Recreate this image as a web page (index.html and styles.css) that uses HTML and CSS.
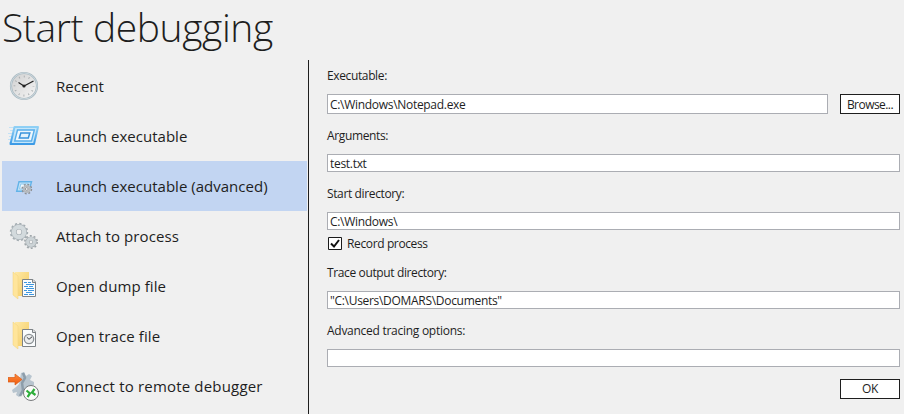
FILE: index.html
```html
<!DOCTYPE html>
<html lang="en">
<head>
<meta charset="utf-8">
<title>Start debugging</title>
<link rel="stylesheet" href="styles.css">
</head>
<body>
<svg class="defs" width="0" height="0" aria-hidden="true">
  <defs>
    <linearGradient id="folder" x1="0" y1="0" x2="1" y2="1"><stop offset="0" stop-color="#ffe9a6"/><stop offset="1" stop-color="#f3cb62"/></linearGradient>
    <linearGradient id="blue" x1="0" y1="0" x2="0" y2="1"><stop offset="0" stop-color="#8fd0f5"/><stop offset="1" stop-color="#3b9ae6"/></linearGradient>
    <linearGradient id="arrow" x1="0" y1="0" x2="0" y2="1"><stop offset="0" stop-color="#ff8a3c"/><stop offset="1" stop-color="#ee5a0c"/></linearGradient>
    <linearGradient id="face" x1="0" y1="0" x2="1" y2="1"><stop offset="0" stop-color="#cfcfcf"/><stop offset="1" stop-color="#f6f6f6"/></linearGradient>
    <g id="folder-shape">
      <path d="M7 2H21V26H7Z" fill="url(#folder)"/>
      <path d="M5 2L10 6V29L5 25Z" fill="#ffe59b" stroke="#f1d27c" stroke-width=".5"/>
      <path d="M14.500 9.500H25L27.500 12V26.500H14.500Z" fill="#fafcfd" stroke="#7d8286"/>
      <path d="M24.500 9.500V12.500H27.500" fill="#ddd" stroke="#7d8286"/>
    </g>
  </defs>
</svg>
<h1 class="title">Start debugging</h1>
<main class="content">
  <nav class="menu">
    <a class="item">
      <svg class="icon" viewBox="0 0 32 32">
        <circle cx="16" cy="16" r="13" fill="url(#face)" stroke="#a9b8c0" stroke-width="2.200"/>
        <circle cx="16" cy="16" r="13.100" fill="none" stroke="#d3dfe4" stroke-width=".8"/>
        <circle cx="16" cy="16" r="9.500" fill="none" stroke="#a9adaf" stroke-width="1.800" stroke-dasharray="1 3.974" stroke-dashoffset=".5"/>
        <path d="M10.500 12.500L16 16L25.500 11" fill="none" stroke="#222" stroke-width="1.200"/>
        <circle cx="16" cy="16" r="1.600" fill="#222"/>
      </svg><span>Recent</span></a>
    <a class="item">
      <svg class="icon" viewBox="0 0 32 32">
        <path d="M1 7.500H8M2 10.500H7M0 13.500H6M1 16.500H5M0 19.500H5M1 22.500H4" stroke="#c3e1f5" stroke-width="1"/>
        <path d="M6.500 7H30L26 24H2.500Z" fill="#c5e6fa" stroke="url(#blue)" stroke-width="2" stroke-linejoin="round"/>
        <path d="M9.500 10H26.300L23.500 21H6.700Z" fill="#eef7fd" stroke="#58aeea" stroke-width="1.400"/>
        <path d="M12.800 13H21.800L20.300 18H11.300Z" fill="#e4f3fc" stroke="#3994dc" stroke-width="1.500"/>
      </svg><span>Launch executable</span></a>
    <a class="item selected">
      <svg class="icon" viewBox="0 0 32 32">
        <path d="M11 11.700H23.500L21 21.300H8.700Z" fill="#c1e1f6" stroke="#62b3e8" stroke-width="1.400"/>
        <path d="M12.800 14H20.800L19.500 19H11.500Z" fill="#edf7fd" stroke="#8fcbf0" stroke-width="1"/>
        <circle cx="18.800" cy="19" r="4.600" fill="none" stroke="#8b8f94" stroke-width="1.600" stroke-dasharray="1.900 1.713"/>
        <circle cx="18.800" cy="19" r="3" fill="#e8eaec" stroke="#b5b9bd" stroke-width="2"/>
        <circle cx="18.800" cy="19" r="1.400" fill="#f6f7f8" stroke="#7e8388" stroke-width=".8"/>
      </svg><span>Launch executable (advanced)</span></a>
    <a class="item attach">
      <svg class="icon" viewBox="0 0 32 32">
        <circle cx="11" cy="12" r="8.400" fill="none" stroke="#a4adb2" stroke-width="1.600" stroke-dasharray="2.200 2.198"/>
        <circle cx="11" cy="12" r="5.200" fill="none" stroke="#a9b2b7" stroke-width="5.600"/>
        <circle cx="11" cy="12" r="5.200" fill="none" stroke="#d3dadd" stroke-width="4.200"/>
        <circle cx="23" cy="22" r="6.200" fill="none" stroke="#a0a7ab" stroke-width="1.600" stroke-dasharray="1.950 1.946"/>
        <circle cx="23" cy="22" r="3.500" fill="none" stroke="#a0a8ac" stroke-width="4.200"/>
        <circle cx="23" cy="22" r="3.500" fill="none" stroke="#ccd3d6" stroke-width="3"/>
      </svg><span>Attach to process</span></a>
    <a class="item attach">
      <svg class="icon" viewBox="0 0 32 32">
        <use href="#folder-shape"/>
        <path d="M16 12.500H19M20 12.500H23M18 14.500H26M16 16.500H20M21 16.500H25M18 18.500H26M16 20.500H19M20 20.500H26M18 22.500H24M16 24.500H20M21 24.500H26" stroke="#3f97df" stroke-width="1"/>
      </svg><span>Open dump file</span></a>
    <a class="item attach">
      <svg class="icon" viewBox="0 0 32 32">
        <use href="#folder-shape"/>
        <circle cx="21" cy="19" r="4.700" fill="#eceeef" stroke="#8b9094" stroke-width="1.300"/>
        <path d="M18.800 17.200L21 19.300L24 16.800" fill="none" stroke="#3c4043" stroke-width="1"/>
      </svg><span>Open trace file</span></a>
    <a class="item remote">
      <svg class="icon" viewBox="0 0 32 32">
        <path d="M13 3L16 2L18 6L21 4L24 6L22 10L26 12V15L20 17L15 24L11 27L8 25L9 22L5 23L4 20L8 17L11 14Z" fill="#b8c5cf"/>
        <path d="M15 3L17 8L14 13L15 20L12 26" fill="none" stroke="#8d9daa" stroke-width="2.500"/>
        <path d="M0 7.500H7V4L14 9.500L7 15V12H0Z" fill="url(#arrow)" stroke="#d95b18" stroke-width=".7"/>
        <circle cx="23" cy="23" r="7.500" fill="#fbfbfb" stroke="#777a7c"/>
        <path d="M18.500 20.500L22 23.500L19.500 27M27.500 25L24 22.500L26.500 19" fill="none" stroke="#2eae3b" stroke-width="2.200"/>
      </svg><span>Connect to remote debugger</span></a>
  </nav>
  <form class="form">
    <label for="exe">Executable:</label>
    <div class="line"><input id="exe" class="field tall" value="C:\Windows\Notepad.exe"><button type="button" class="button browse">Browse...</button></div>
    <label for="args">Arguments:</label>
    <input id="args" class="field" value="test.txt">
    <label for="dir">Start directory:</label>
    <input id="dir" class="field" value="C:\Windows\">
    <div class="check"><svg class="box" viewBox="0 0 14 14"><path d="M.5.5H13.500V12.500H.5Z" fill="#fff" stroke="#1b1b1b"/><path d="M3 6.500L6 9.500L11 3" fill="none" stroke="#111" stroke-width="2"/></svg><span>Record process</span></div>
    <label for="trace">Trace output directory:</label>
    <input id="trace" class="field" value="&quot;C:\Users\DOMARS\Documents&quot;">
    <label for="adv" class="wide">Advanced tracing options:</label>
    <input id="adv" class="field">
    <button type="button" class="button ok">OK</button>
  </form>
</main>
</body>
</html>
```
FILE: styles.css
```css
* { box-sizing: border-box; }
body {
  margin: 0;
  height: 414px;
  overflow: hidden;
  background: #f0f0f0;
  color: #1e1e1e;
  font: 12px/16px "Open Sans", "Noto Sans", sans-serif;
}
.defs { display: block; }
.title {
  margin: 0;
  height: 60px;
  padding-left: 2px;
  font-size: 39px;
  line-height: 53px;
  font-weight: 300;
  letter-spacing: -.4px;
  white-space: nowrap;
}
.content { display: flex; height: 354px; }
.menu {
  width: 309px;
  padding: 1px 1px 0 2px;
  border-right: 1px solid #1e1e1e;
}
.item {
  display: flex;
  align-items: center;
  gap: 16px;
  height: 50px;
  padding-left: 6px;
  font-size: 15px;
  letter-spacing: .02px;
  white-space: nowrap;
}
.attach { letter-spacing: .1px; }
.remote { letter-spacing: .18px; }
.selected { background: #c2d5f2; }
.icon { flex: none; width: 32px; height: 32px; }
.form {
  display: flex;
  flex-direction: column;
  flex: 1;
  padding: 7px 4px 0 18px;
  letter-spacing: -.37px;
}
.form label { padding-top: 1px; margin-bottom: 10px; }
.form .wide { letter-spacing: -.27px; }
.line { display: flex; gap: 12px; margin-bottom: 13px; }
.field {
  width: 100%;
  height: 18px;
  margin: 0 0 13px;
  padding: 0 2px;
  border: 1px solid #abadb3;
  border-radius: 0;
  background: #fff;
  color: inherit;
  font: inherit;
  letter-spacing: -.3px;
}
.tall { flex: 1; height: 20px; margin: 0; }
.button {
  width: 60px;
  height: 20px;
  padding: 0;
  border: 1px solid #1e1e1e;
  border-radius: 0;
  background: #fff;
  color: inherit;
  font: inherit;
  letter-spacing: inherit;
}
.browse { padding-top: 1px; letter-spacing: -.55px; }
.check {
  display: flex;
  align-items: center;
  gap: 5px;
  height: 16px;
  margin: -7px 0 12px 1px;
}
.box { width: 14px; height: 14px; }
#adv { margin-bottom: 12px; }
.ok { align-self: flex-end; }
```
